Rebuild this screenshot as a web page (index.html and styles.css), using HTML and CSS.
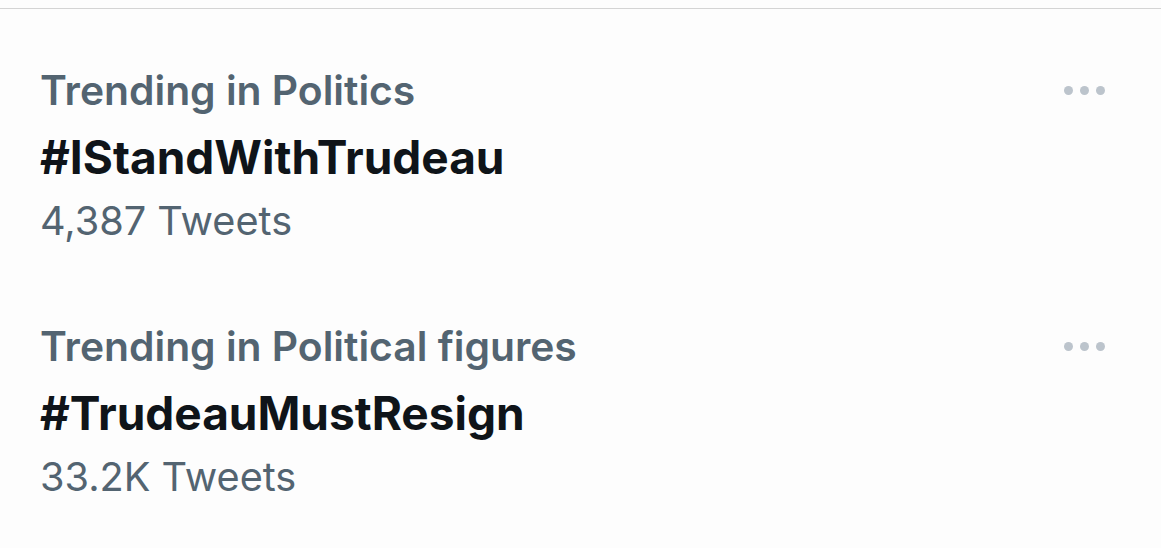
FILE: index.html
```html
<!DOCTYPE html>
<html>
<head>
<meta charset="utf-8">
<link rel="stylesheet" href="styles.css">
</head>
<body>
<div class="topline"></div>
<div class="list">
  <div class="trend">
    <div class="info">
      <div class="context">Trending in Politics</div>
      <div class="tag">#IStandWithTrudeau</div>
      <div class="count">4,387 Tweets</div>
    </div>
    <div class="more"><span></span><span></span><span></span></div>
  </div>
  <div class="trend">
    <div class="info">
      <div class="context">Trending in Political figures</div>
      <div class="tag">#TrudeauMustResign</div>
      <div class="count">33.2K Tweets</div>
    </div>
    <div class="more"><span></span><span></span><span></span></div>
  </div>
</div>
</body>
</html>
```
FILE: styles.css
```css
html, body {
  margin: 0;
  padding: 0;
  background: #fdfdfd;
  font-family: Inter, "Noto Sans", sans-serif;
}
.topline {
  margin-top: 8px;
  height: 1px;
  background: #d4d4d4;
}
.list {
  display: flex;
  flex-direction: column;
  padding-top: 56px;
  gap: 77px;
}
.trend {
  display: flex;
  justify-content: space-between;
  align-items: flex-start;
  padding: 0 56px 0 40px;
}
.context {
  font-size: 40.8px;
  line-height: 50px;
  font-weight: 600;
  color: #536471;
}
.tag {
  font-size: 46px;
  line-height: 52px;
  font-weight: 700;
  color: #0f1419;
  margin-top: 16px;
}
.count {
  font-size: 39.7px;
  line-height: 46px;
  font-weight: 400;
  color: #536471;
  margin-top: 15px;
}
.more {
  display: flex;
  gap: 7px;
  margin-top: 21px;
}
.more span {
  width: 9px;
  height: 9px;
  border-radius: 50%;
  background: #bcc4cc;
}
```
